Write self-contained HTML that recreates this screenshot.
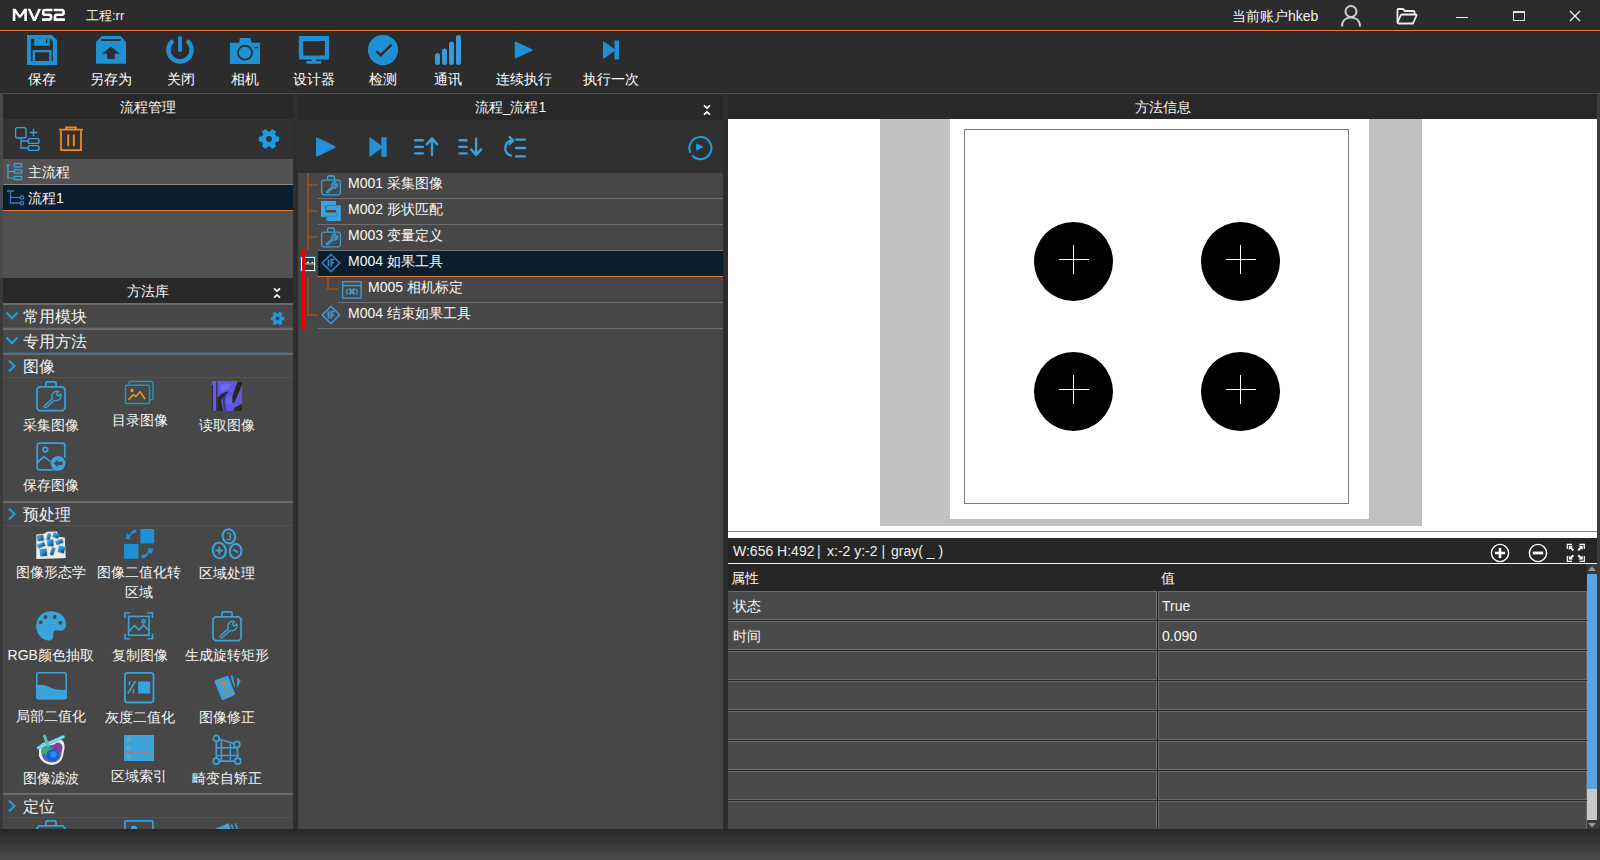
<!DOCTYPE html>
<html><head><meta charset="utf-8">
<style>
*{margin:0;padding:0;box-sizing:border-box}
html,body{width:1600px;height:860px;overflow:hidden;background:#2c2c2c;font-family:"Liberation Sans",sans-serif;color:#f0f0f0}
.a{position:absolute}
.t{position:absolute;white-space:nowrap;line-height:1}
svg{position:absolute;overflow:visible}
</style></head><body>
<div class="a" style="left:0px;top:0px;width:1600px;height:30px;background:#2c2c2c;"></div>
<svg style="left:0px;top:0px" width="80" height="30" viewBox="0 0 80 30"><g fill="#fff">
  <path d="M12.8 20.9V8.75H15.6L19.9 15.2L24.2 8.75H26.9V20.9H24.3V12.9L20.9 17.8H18.9L15.4 12.9V20.9Z"/>
  <path d="M27.6 8.75H30.4L34.4 17.6L38.4 8.75H41.1L35.7 20.9H33.1Z"/>
 </g>
 <g fill="none" stroke="#fff" stroke-width="2.6">
  <path d="M52.4 10.05H45.2Q43.2 10.05 43.2 12.05V12.9Q43.2 14.75 45.2 14.75H49.1Q51.1 14.75 51.1 16.75V17.6Q51.1 19.6 49.1 19.6H41.9"/>
  <path d="M53.7 10.05H61.6Q63.6 10.05 63.6 12.05V12.9Q63.6 14.75 61.6 14.75H57Q55 14.75 55 16.75V19.6H64.9"/>
 </g></svg>
<div class="t" style="left:86px;top:9px;font-size:13px;color:#f2f2f2;">工程:rr</div>
<div class="t" style="left:1232px;top:9px;font-size:14px;color:#f2f2f2;">当前账户hkeb</div>
<svg style="left:1338px;top:3px" width="26" height="26" viewBox="0 0 26 26"><g fill="none" stroke="#cfcfcf" stroke-width="2">
  <circle cx="13" cy="8.5" r="5.5"/>
  <path d="M4 23.5C4 17.5 8 14.5 13 14.5S22 17.5 22 23.5"/>
 </g></svg>
<svg style="left:1395px;top:6px" width="24" height="20" viewBox="0 0 24 20"><g fill="none" stroke="#f0f0f0" stroke-width="1.8" stroke-linejoin="round">
  <path d="M2.5 16.5V4Q2.5 3 3.5 3H8L10 5H18.5Q19.5 5 19.5 6V8.5"/>
  <path d="M2.5 16.5Q3 17.5 4 17.5H18L21.5 9.5Q21.8 8.5 20.8 8.5H7Q6 8.5 5.6 9.5L2.5 16.5Z"/>
 </g></svg>
<div class="a" style="left:1456px;top:17px;width:12px;height:1px;background:#eee;"></div>
<div class="a" style="left:1513px;top:11px;width:12px;height:10px;background:transparent;border:1px solid #ddd;border-top-width:2px"></div>
<svg style="left:1568px;top:9px" width="14" height="14" viewBox="0 0 14 14"><path d="M2 2L12 12M12 2L2 12" stroke="#eee" stroke-width="1.3"/></svg>
<div class="a" style="left:0px;top:30px;width:1600px;height:1px;background:#ec7541;"></div>
<div class="a" style="left:0px;top:31px;width:1600px;height:62px;background:#2c2c2c;"></div>
<svg style="left:27px;top:35px" width="30" height="30" viewBox="0 0 30 30"><path d="M0 0H24.6L30 5.1V30H0Z" fill="#2090d5"/>
 <path d="M3.9 3.7H23.3L25.9 6.5V25.9H3.9Z" fill="#2c2c2c"/>
 <rect x="7.25" y="3.7" width="15.45" height="7.1" fill="#2090d5"/>
 <rect x="19" y="4.5" width="1.4" height="3.6" fill="#2c2c2c"/>
 <rect x="5.6" y="15" width="19" height="10.9" fill="#2090d5"/>
 <rect x="8.1" y="17.3" width="14" height="8.7" fill="#2c2c2c"/></svg>
<svg style="left:96px;top:36px" width="30" height="28" viewBox="0 0 30 28"><path d="M5.9 0H24.6L30 6V27.8H0V6Z" fill="#2090d5"/>
 <path d="M5.6 3.1H24.4Q25.3 3.1 24.6 4.2L24.2 5H5.8L5.3 4.2Q4.7 3.1 5.6 3.1Z" fill="#2c2c2c"/>
 <path d="M15 10.4L23.8 17.8H18.75V23H11.2V17.8H6Z" fill="#2c2c2c"/></svg>
<svg style="left:162px;top:32px" width="36" height="36" viewBox="0 0 36 36"><path d="M18 5.9V18.2" stroke="#2090d5" stroke-width="3.8" stroke-linecap="round" fill="none"/>
 <path d="M9.6 10A11.55 11.55 0 1 0 26.4 10" stroke="#2090d5" stroke-width="4.5" stroke-linecap="round" fill="none"/></svg>
<svg style="left:227px;top:32px" width="36" height="36" viewBox="0 0 36 36"><path d="M12.3 10.7L12.8 5.9H23.5L24.6 10.7H32.3Q33 10.7 33 11.4V31.3Q33 32 32.3 32H3.6Q2.9 32 2.9 31.3V11.4Q2.9 10.7 3.6 10.7Z" fill="#2090d5"/>
 <circle cx="18" cy="20.7" r="7" fill="none" stroke="#2c2c2c" stroke-width="1.7"/>
 <rect x="27.4" y="14.85" width="3.6" height="1.4" rx="0.6" fill="#2c2c2c"/></svg>
<svg style="left:296px;top:32px" width="36" height="36" viewBox="0 0 36 36"><path d="M2.9 4H33.05V27.6H2.9Z M7.1 9V23.6H28.9V9Z" fill="#2090d5" fill-rule="evenodd"/>
 <rect x="15.9" y="27" width="4.2" height="3.5" fill="#2090d5"/>
 <rect x="10.25" y="28.9" width="15.25" height="2.9" rx="1.2" fill="#2090d5"/></svg>
<svg style="left:365px;top:32px" width="36" height="36" viewBox="0 0 36 36"><circle cx="18" cy="18" r="15.05" fill="#2090d5"/>
 <path d="M11.3 19L15.7 23.4L26.6 12.55" stroke="#2c2c2c" stroke-width="2.4" fill="none"/></svg>
<svg style="left:430px;top:32px" width="36" height="36" viewBox="0 0 36 36"><g stroke="#3a9ad6" stroke-width="5" stroke-linecap="round">
  <path d="M7.5 23.6V30.5M14.5 19V30.5M21.5 12.1V30.5M28.5 5.4V30.5"/></g></svg>
<svg style="left:512px;top:38px" width="24" height="24" viewBox="0 0 24 24"><path d="M4.2 3.8Q2.75 2.9 2.75 4.6V19.4Q2.75 21.1 4.2 20.2L20.2 12.8Q21.2 12 20.2 11.2Z" fill="#2090d5"/></svg>
<svg style="left:600px;top:38px" width="24" height="24" viewBox="0 0 24 24"><path d="M4.2 3.8Q3 2.9 3 4.6V19.4Q3 21.1 4.2 20.2L14.5 13V21.4H19V2.6H14.5V11Z" fill="#2090d5"/></svg>
<div class="t" style="left:2.0px;top:72px;width:80px;text-align:center;font-size:14px;color:#ffffff;">保存</div>
<div class="t" style="left:70.6px;top:72px;width:80px;text-align:center;font-size:14px;color:#ffffff;">另存为</div>
<div class="t" style="left:140.6px;top:72px;width:80px;text-align:center;font-size:14px;color:#ffffff;">关闭</div>
<div class="t" style="left:205.0px;top:72px;width:80px;text-align:center;font-size:14px;color:#ffffff;">相机</div>
<div class="t" style="left:274.0px;top:72px;width:80px;text-align:center;font-size:14px;color:#ffffff;">设计器</div>
<div class="t" style="left:343.0px;top:72px;width:80px;text-align:center;font-size:14px;color:#ffffff;">检测</div>
<div class="t" style="left:408.0px;top:72px;width:80px;text-align:center;font-size:14px;color:#ffffff;">通讯</div>
<div class="t" style="left:483.5px;top:72px;width:80px;text-align:center;font-size:14px;color:#ffffff;">连续执行</div>
<div class="t" style="left:570.5px;top:72px;width:80px;text-align:center;font-size:14px;color:#ffffff;">执行一次</div>
<div class="a" style="left:0px;top:93px;width:1600px;height:1px;background:#4d4d4d;"></div>
<div class="a" style="left:0px;top:94px;width:3px;height:184px;background:#4a4a4a;"></div>
<div class="a" style="left:0px;top:278px;width:3px;height:552px;background:#3a3a3a;"></div>
<div class="a" style="left:3px;top:94px;width:290px;height:25px;background:#282828;"></div>
<div class="t" style="left:48.0px;top:100px;width:200px;text-align:center;font-size:14px;color:#f8f8f8;">流程管理</div>
<div class="a" style="left:3px;top:119px;width:290px;height:40px;background:#313131;"></div>
<svg style="left:12px;top:124px" width="30" height="30" viewBox="0 0 30 30"><g fill="none" stroke="#3aa3dc" stroke-width="1.3">
  <rect x="3.6" y="3.6" width="10.4" height="10.4" rx="2"/>
  <path d="M17.8 8.5H25.2M21.5 4.8V12.2"/>
  <rect x="16.2" y="14.6" width="10.8" height="4.8" rx="2"/>
  <rect x="16.2" y="21.6" width="10.8" height="4.8" rx="2"/>
  <path d="M9 14V24H16.2M9 17H16.2"/>
 </g></svg>
<svg style="left:56px;top:124px" width="30" height="30" viewBox="0 0 30 30"><g fill="none" stroke="#f28a18" stroke-width="1.8">
  <path d="M3 5.6H27M10.2 5.6V3.4H19.8V5.6"/>
  <path d="M5 6.5V26.1H25V6.5"/>
  <path d="M12.2 10.5V22.2M17.8 10.5V22.2" stroke-width="1.9"/>
 </g></svg>
<svg style="left:258px;top:128px" width="22" height="22" viewBox="0 0 22 22"><path fill="#1a9be2" fill-rule="evenodd" d="M18.10 8.28 L21.13 8.66 L21.13 13.34 L18.10 13.72 L16.91 15.78 L18.09 18.61 L14.04 20.95 L12.19 18.51 L9.81 18.51 L7.96 20.95 L3.91 18.61 L5.09 15.78 L3.90 13.72 L0.87 13.34 L0.87 8.66 L3.90 8.28 L5.09 6.22 L3.91 3.39 L7.96 1.05 L9.81 3.49 L12.19 3.49 L14.04 1.05 L18.09 3.39 L16.91 6.22Z M13.90 11.00A2.9 2.9 0 1 0 8.10 11.00A2.9 2.9 0 1 0 13.90 11.00Z"/></svg>
<div class="a" style="left:3px;top:159px;width:290px;height:119px;background:#515151;"></div>
<div class="a" style="left:3px;top:184px;width:290px;height:1px;background:#8a8a8a;"></div>
<div class="a" style="left:3px;top:185px;width:290px;height:25px;background:#0b1e2c;"></div>
<div class="a" style="left:3px;top:210px;width:290px;height:1px;background:#ea7440;"></div>
<svg style="left:5px;top:162px" width="20" height="20" viewBox="0 0 20 20"><g fill="none" stroke="#3ea6df" stroke-width="1.2">
  <path d="M1.5 3H5M3 3V16H9M3 9.5H9"/>
  <rect x="9.2" y="1.6" width="7.6" height="3.2" rx="0.5"/>
  <rect x="9.2" y="7.9" width="7.6" height="3.2" rx="0.5"/>
  <rect x="9.2" y="14.4" width="7.6" height="3.2" rx="0.5"/>
 </g></svg>
<svg style="left:5px;top:188px" width="20" height="20" viewBox="0 0 20 20"><g fill="none" stroke="#3a7fc4" stroke-width="1.3">
  <path d="M2 3H9M5.5 3V15H16"/>
  <path d="M5.5 9.5H16"/>
  <circle cx="17" cy="9.5" r="1.7"/>
  <circle cx="17" cy="15" r="1.7"/>
 </g></svg>
<div class="t" style="left:28px;top:165px;font-size:14px;color:#f8f8f8;">主流程</div>
<div class="t" style="left:28px;top:191px;font-size:14px;color:#f8f8f8;">流程1</div>
<div class="a" style="left:3px;top:278px;width:290px;height:25px;background:#282828;"></div>
<div class="t" style="left:48.0px;top:284px;width:200px;text-align:center;font-size:14px;color:#f8f8f8;">方法库</div>
<svg style="left:272px;top:286px" width="10" height="14" viewBox="0 0 10 14"><path d="M2 2.4L5 5.2L8 2.4M2 11.6L5 8.8L8 11.6" stroke="#fff" stroke-width="1.7" fill="none"/></svg>
<div class="a" style="left:3px;top:303px;width:290px;height:527px;background:#474747;"></div>
<div class="a" style="left:3px;top:303px;width:290px;height:2px;background:#6a6a6a;"></div>
<div class="a" style="left:3px;top:327px;width:290px;height:1px;background:#3b5870;"></div>
<svg style="left:5px;top:311px" width="14" height="10" viewBox="0 0 14 10"><path d="M1.5 1.5L7 7.2L12.5 1.5" stroke="#1aa0e2" stroke-width="2" fill="none"/></svg>
<div class="t" style="left:23px;top:309px;font-size:16px;color:#f2f2f2;">常用模块</div>
<svg style="left:270px;top:311px" width="15" height="15" viewBox="0 0 22 22"><path fill="#1a9be2" fill-rule="evenodd" d="M18.10 8.28 L21.13 8.66 L21.13 13.34 L18.10 13.72 L16.91 15.78 L18.09 18.61 L14.04 20.95 L12.19 18.51 L9.81 18.51 L7.96 20.95 L3.91 18.61 L5.09 15.78 L3.90 13.72 L0.87 13.34 L0.87 8.66 L3.90 8.28 L5.09 6.22 L3.91 3.39 L7.96 1.05 L9.81 3.49 L12.19 3.49 L14.04 1.05 L18.09 3.39 L16.91 6.22Z M13.90 11.00A2.9 2.9 0 1 0 8.10 11.00A2.9 2.9 0 1 0 13.90 11.00Z"/></svg>
<div class="a" style="left:3px;top:328px;width:290px;height:2px;background:#6a6a6a;"></div>
<div class="a" style="left:3px;top:352px;width:290px;height:1px;background:#3b5870;"></div>
<svg style="left:5px;top:336px" width="14" height="10" viewBox="0 0 14 10"><path d="M1.5 1.5L7 7.2L12.5 1.5" stroke="#1aa0e2" stroke-width="2" fill="none"/></svg>
<div class="t" style="left:23px;top:334px;font-size:16px;color:#f2f2f2;">专用方法</div>
<div class="a" style="left:3px;top:353px;width:290px;height:2px;background:#6a6a6a;"></div>
<div class="a" style="left:3px;top:377px;width:290px;height:1px;background:#3b5870;"></div>
<svg style="left:6px;top:359px" width="12" height="14" viewBox="0 0 12 14"><path d="M2.8 1.5L8.6 7L2.8 12.5" stroke="#1aa0e2" stroke-width="2" fill="none"/></svg>
<div class="t" style="left:23px;top:359px;font-size:16px;color:#f2f2f2;">图像</div>
<div class="a" style="left:3px;top:501px;width:290px;height:2px;background:#6a6a6a;"></div>
<div class="a" style="left:3px;top:525px;width:290px;height:1px;background:#3b5870;"></div>
<svg style="left:6px;top:507px" width="12" height="14" viewBox="0 0 12 14"><path d="M2.8 1.5L8.6 7L2.8 12.5" stroke="#1aa0e2" stroke-width="2" fill="none"/></svg>
<div class="t" style="left:23px;top:507px;font-size:16px;color:#f2f2f2;">预处理</div>
<div class="a" style="left:3px;top:793px;width:290px;height:2px;background:#6a6a6a;"></div>
<div class="a" style="left:3px;top:817px;width:290px;height:1px;background:#3b5870;"></div>
<svg style="left:6px;top:799px" width="12" height="14" viewBox="0 0 12 14"><path d="M2.8 1.5L8.6 7L2.8 12.5" stroke="#1aa0e2" stroke-width="2" fill="none"/></svg>
<div class="t" style="left:23px;top:799px;font-size:16px;color:#f2f2f2;">定位</div>
<svg style="left:36px;top:381px" width="30" height="30" viewBox="0 0 30 30"><g transform="scale(1.0)"><g fill="none" stroke="#3aa3dc" stroke-width="1.7">
  <path d="M3.2 5.9H26.8L29 8.1V27.5L26.8 29.7H3.2L1 27.5V8.1Z"/>
  <path d="M9.9 5.9V2.4Q9.9 0.9 11.4 0.9H18.6Q20.1 0.9 20.1 2.4V5.9"/>
 </g>
 <path d="M8.6 24.4L16.5 17.6A5 5 0 0 1 22.5 10.5L20.4 13.2L22.2 15.1L24.6 13A5 5 0 0 1 18.3 19.5L10.4 26.4Q9 27.2 8.2 26.2Q7.6 25.2 8.6 24.4Z" fill="none" stroke="#3aa3dc" stroke-width="1.3"/>
 <path d="M10 25L16.5 19.2" stroke="#3aa3dc" stroke-width="0.7" stroke-dasharray="1.2 1"/></g></svg>
<svg style="left:124px;top:380px" width="32" height="26" viewBox="0 0 32 26"><g fill="none" stroke="#1e9ab4" stroke-width="1.5">
  <path d="M5.2 4.6V2.6Q5.2 1.5 6.3 1.5H27.9Q29 1.5 29 2.6V18.4Q29 19.5 27.9 19.5H25.5"/>
  <rect x="1.5" y="5.2" width="24" height="18.2" rx="1.2"/>
 </g>
 <circle cx="8" cy="10.4" r="1.7" fill="#f09a1a"/>
 <path d="M4.5 19.6L9.6 14.6L12 16.6L16 11.7L21 19" stroke="#f09a1a" stroke-width="1.5" fill="none" stroke-linejoin="round"/></svg>
<svg style="left:212px;top:381px" width="30" height="30" viewBox="0 0 30 30"><rect width="30" height="30" fill="#5b57de"/>
 <rect x="0" y="4" width="1" height="26" fill="#2c2c3a"/>
 <rect x="1" y="0" width="3" height="30" fill="#615df0"/>
 <rect x="4" y="0" width="1.4" height="30" fill="#34344a"/>
 <path d="M5.4 30V17Q9 12 16.7 10.3L13.6 14.2Q9.5 17 9.2 21L11.5 30Z" fill="#2a2a22"/><path d="M11 16L14.5 14Q12 19 13.5 24L15 30H12.5L10.8 22Z" fill="#3e3a8a"/>
 <path d="M25.7 0.4H30V4L22.3 21.5L18.8 22Q21 12 25.7 0.4Z" fill="#26261c"/>
 <path d="M22.3 26.7L30 22.8V30H21.5Z" fill="#2a2a20"/>
 <path d="M8 4Q13 1 19 3.5L16 8Q12 9 8.5 12Z" fill="#6d69f2"/>
 <ellipse cx="17.5" cy="19" rx="3" ry="4.5" fill="#6763ea"/></svg>
<svg style="left:36px;top:442px" width="32" height="32" viewBox="0 0 32 32"><g fill="none" stroke="#3aa3dc" stroke-width="1.7">
  <path d="M21 27.8H3.6Q1.2 27.8 1.2 25.4V3.6Q1.2 1.2 3.6 1.2H26.4Q28.8 1.2 28.8 3.6V16"/>
  <circle cx="9.3" cy="7.6" r="2.3"/>
  <path d="M1.2 20.5L8 14.6L14.6 19.6"/>
 </g>
 <circle cx="22.1" cy="21.4" r="7.9" fill="#474747"/>
 <circle cx="22.1" cy="21.4" r="7.4" fill="#3aa3dc"/>
 <path d="M17.6 21.4L21.6 17.6V19.7H26.6V23.1H21.6V25.2Z" fill="#474747"/></svg>
<svg style="left:36px;top:531px" width="30" height="28" viewBox="0 0 30 28"><defs><linearGradient id="mg" x1="0" y1="0" x2="1" y2="1"><stop offset="0" stop-color="#46aef0"/><stop offset="0.55" stop-color="#2585c4"/><stop offset="1" stop-color="#0b3550"/></linearGradient></defs>
 <path d="M0.3 3.5L8 2.7L11 0.8L21 0.4L23 6L28.8 6.5L29.8 27L18.5 27.5L0.3 28Z" fill="#ececec"/>
 <g transform="translate(4.2 6.9) rotate(-10)"><rect x="-2.6999999999999997" y="-1.9" width="6.6" height="5.6" fill="#9a9a9a" opacity="0.6"/><path d="M-3.3 -2.8H3.3L2.9699999999999998 2.8H-2.9699999999999998Z" fill="url(#mg)"/></g>
 <g transform="translate(12.6 5.6) rotate(15)"><rect x="-1.2000000000000002" y="-2.5" width="3.6" height="6.8" fill="#9a9a9a" opacity="0.6"/><path d="M-1.8 -3.4H1.8L1.62 3.4H-1.62Z" fill="url(#mg)"/></g>
 <g transform="translate(20 4.3) rotate(20)"><rect x="-2.6" y="-1.5" width="6.4" height="4.8" fill="#9a9a9a" opacity="0.6"/><path d="M-3.2 -2.4H3.2L2.8800000000000003 2.4H-2.8800000000000003Z" fill="url(#mg)"/></g>
 <g transform="translate(5 14.2) rotate(-25)"><rect x="-3.4" y="-1.1" width="8" height="4" fill="#9a9a9a" opacity="0.6"/><path d="M-4 -2H4L3.6 2H-3.6Z" fill="url(#mg)"/></g>
 <g transform="translate(14.3 11.8) rotate(0)"><rect x="-2.6" y="-2.3000000000000003" width="6.4" height="6.4" fill="#9a9a9a" opacity="0.6"/><path d="M-3.2 -3.2H3.2L2.8800000000000003 3.2H-2.8800000000000003Z" fill="url(#mg)"/></g>
 <g transform="translate(23.2 10.9) rotate(-20)"><rect x="-3.1999999999999997" y="-1.1" width="7.6" height="4" fill="#9a9a9a" opacity="0.6"/><path d="M-3.8 -2H3.8L3.42 2H-3.42Z" fill="url(#mg)"/></g>
 <g transform="translate(7.3 21.5) rotate(-5)"><rect x="-3.0" y="-2.7" width="7.2" height="7.2" fill="#9a9a9a" opacity="0.6"/><path d="M-3.6 -3.6H3.6L3.24 3.6H-3.24Z" fill="url(#mg)"/></g>
 <g transform="translate(16.5 20.2) rotate(20)"><rect x="-1.2999999999999998" y="-2.9" width="3.8" height="7.6" fill="#9a9a9a" opacity="0.6"/><path d="M-1.9 -3.8H1.9L1.71 3.8H-1.71Z" fill="url(#mg)"/></g>
 <g transform="translate(25.4 18.3) rotate(15)"><rect x="-2.8" y="-2.3000000000000003" width="6.8" height="6.4" fill="#9a9a9a" opacity="0.6"/><path d="M-3.4 -3.2H3.4L3.06 3.2H-3.06Z" fill="url(#mg)"/></g></svg>
<svg style="left:123px;top:528px" width="32" height="32" viewBox="0 0 32 32"><g fill="#2090d5">
  <rect x="17.3" y="1" width="13.9" height="14.5"/>
  <rect x="1" y="16" width="14.5" height="14.7"/>
  <path d="M13.3 1.2Q7.8 1.8 6.8 7.3L4.2 5.6L2.5 10.7L7.9 11.5L6.8 9.7Q8.3 4.9 13.3 4.8Z"/>
  <path d="M18.7 30.6Q24.8 30 25.6 24.4L28.2 26.2L30.3 20.8L24.5 20.1L25.6 21.8Q24.4 26.6 18.7 27.1Z"/>
 </g></svg>
<svg style="left:207px;top:524px" width="40" height="40" viewBox="0 0 40 40"><g fill="none" stroke="#3aa3dc" stroke-width="2.1">
  <ellipse cx="21.9" cy="12.3" rx="6.2" ry="7.1" transform="rotate(-15 21.9 12.3)"/>
  <ellipse cx="12.3" cy="26.5" rx="6.6" ry="7.8" transform="rotate(-10 12.3 26.5)"/>
  <ellipse cx="28.6" cy="27" rx="5.8" ry="7" transform="rotate(8 28.6 27)"/>
  <path d="M19.8 9.8Q22.5 8.2 23.6 10.4Q24 12 22 12.4Q24.4 13 23.4 15Q22 16.5 19.8 15" stroke-width="1.2"/>
  <path d="M12.3 22.8V30.2M8.6 26.5H16" stroke-width="1.9"/>
  <path d="M26 25.5L31 28.3" stroke-width="1.9"/>
 </g></svg>
<svg style="left:35px;top:610px" width="32" height="32" viewBox="0 0 32 32"><path d="M16 1.2C24.5 1.2 31 6.6 31 14.2C31 19.8 27 21.4 23 20.4C19.6 19.6 17.5 21.5 18.2 25.2C18.9 28.8 16.5 30.8 13.3 30.5C6.2 29.8 1.2 23.7 1.2 16C1.2 7.4 7.5 1.2 16 1.2Z" fill="#3aa3dc"/>
 <g fill="#474747"><circle cx="10.5" cy="7" r="1.9"/><circle cx="19.8" cy="7" r="1.9"/><circle cx="5.8" cy="12.3" r="1.9"/><circle cx="25.3" cy="12.8" r="1.9"/></g></svg>
<svg style="left:124px;top:612px" width="30" height="28" viewBox="0 0 30 28"><g fill="none" stroke="#3aa3dc" stroke-width="1.6">
  <path d="M1 6V1H6M23.5 1H28.5V6M28.5 21.5V26.8H23.5M6 26.8H1V21.5"/>
  <rect x="4.6" y="4.4" width="20.5" height="18.8"/>
  <path d="M4.6 19.5L10.5 13.5L15 17.8L19.5 13.2L25 18.8"/>
  <circle cx="19.6" cy="9.3" r="1.6"/>
 </g></svg>
<svg style="left:212px;top:611px" width="30" height="30" viewBox="0 0 30 30"><g transform="scale(1.0)"><g fill="none" stroke="#3aa3dc" stroke-width="1.7">
  <path d="M3.2 5.9H26.8L29 8.1V27.5L26.8 29.7H3.2L1 27.5V8.1Z"/>
  <path d="M9.9 5.9V2.4Q9.9 0.9 11.4 0.9H18.6Q20.1 0.9 20.1 2.4V5.9"/>
 </g>
 <path d="M8.6 24.4L16.5 17.6A5 5 0 0 1 22.5 10.5L20.4 13.2L22.2 15.1L24.6 13A5 5 0 0 1 18.3 19.5L10.4 26.4Q9 27.2 8.2 26.2Q7.6 25.2 8.6 24.4Z" fill="none" stroke="#3aa3dc" stroke-width="1.3"/>
 <path d="M10 25L16.5 19.2" stroke="#3aa3dc" stroke-width="0.7" stroke-dasharray="1.2 1"/></g></svg>
<svg style="left:36px;top:672px" width="31" height="28" viewBox="0 0 31 28"><rect x="0.8" y="0.8" width="29.4" height="26.2" rx="2" fill="none" stroke="#3aa3dc" stroke-width="1.6"/>
 <path d="M0.8 13.5Q6 11.5 12 14.5Q19 18.5 30.2 18V25Q30.2 27 28.2 27H2.8Q0.8 27 0.8 25Z" fill="#3aa3dc"/></svg>
<svg style="left:124px;top:672px" width="31" height="32" viewBox="0 0 31 32"><rect x="0.9" y="0.9" width="28.6" height="29.6" rx="2.5" fill="none" stroke="#3aa3dc" stroke-width="1.8"/>
 <rect x="14.2" y="9.5" width="12" height="12" fill="#3aa3dc"/>
 <g stroke="#3aa3dc" stroke-width="1.6" fill="none"><path d="M5.5 13V9M3.8 21.5L11.5 9M9.5 17V21.5"/></g></svg>
<svg style="left:208px;top:668px" width="40" height="38" viewBox="0 0 40 38"><path d="M7.2 12.3Q6 12.8 6.5 14L13.7 31.2Q14.2 32.4 15.4 31.9L26.2 27.3Q27.4 26.8 26.9 25.6L20.4 8.6Q19.9 7.4 18.7 7.9Z" fill="#3aa3dc"/>
 <path d="M9.2 14.4H17.5L14.6 19.5L22.5 22L16.5 28.5" stroke="#e07a28" stroke-width="1" fill="none"/>
 <circle cx="19.3" cy="16.5" r="0.9" fill="#e07a28"/>
 <path d="M22.2 7.5L24.7 7.8L27.2 18.5L26.3 19.2Z" fill="#3aa3dc"/>
 <path d="M29 9.3L32.6 12.5L29.4 20.8Z" fill="#3aa3dc"/></svg>
<svg style="left:36px;top:734px" width="30" height="32" viewBox="0 0 30 32"><path d="M3 16Q3 9 10 8L24 5Q29 7 28.5 14L27 22Q25 30 16 31Q6 30 3 22Z" fill="#f0f0f0"/>
 <path d="M5 17Q6 12 11 12L20 10Q26 11 26 16L25 22Q23 28 16 28.5Q8 28 6 22Z" fill="#6a5ab8"/>
 <ellipse cx="11" cy="17" rx="6" ry="4" fill="#34b07a"/>
 <ellipse cx="22" cy="13.5" rx="4.5" ry="5" fill="#7c3f9c"/>
 <circle cx="16.5" cy="21.5" r="6.2" fill="#1760d0"/>
 <circle cx="17.5" cy="20.5" r="3.2" fill="#2f8af2"/>
 <path d="M2.2 13.8L27.3 2.8" stroke="#3ab4d8" stroke-width="3.4" stroke-linecap="round"/>
 <path d="M2.2 13.8L27.3 2.8" stroke="#8ae8f6" stroke-width="1.6" stroke-linecap="round"/>
 <path d="M8.5 2L12 11.5" stroke="#5cc0a8" stroke-width="3" stroke-linecap="round"/></svg>
<svg style="left:124px;top:735px" width="31" height="27" viewBox="0 0 31 27"><rect x="0" y="0" width="30" height="26" fill="#8a8a8a"/>
 <g fill="#3aa3dc"><rect x="0" y="0" width="30" height="7.8"/><rect x="0" y="9" width="30" height="7.7"/><rect x="0" y="18" width="30" height="8"/></g>
 <g fill="#2a2a2a" stroke="#d8ecf8" stroke-width="0.6"><circle cx="4.8" cy="4" r="1.1"/><circle cx="4.8" cy="13" r="1.1"/><circle cx="4.8" cy="22" r="1.1"/></g></svg>
<svg style="left:212px;top:735px" width="31" height="31" viewBox="0 0 31 31"><g fill="none" stroke="#3aa3dc" stroke-width="1.7">
  <circle cx="4.3" cy="3.4" r="3"/><circle cx="24.8" cy="9.4" r="3"/><circle cx="4.3" cy="26.2" r="3"/><circle cx="25.7" cy="26.2" r="3"/>
  <path d="M7.2 4.3L21.9 8.5M4.3 6.4V23.2M7.3 26.2H22.7M25.4 12.4L25.7 23.2"/>
  <path d="M9.4 5.2V26.2M18.3 7.8V26.2M4.3 12.7H25.2M4.3 20.6H25.5" stroke-width="1.5"/>
 </g></svg>
<div class="a" style="left:0;top:819px;width:293px;height:11px;overflow:hidden"><svg style="left:36px;top:1px" width="30" height="30" viewBox="0 0 30 30"><g transform="scale(1.0)"><g fill="none" stroke="#3aa3dc" stroke-width="1.7">
  <path d="M3.2 5.9H26.8L29 8.1V27.5L26.8 29.7H3.2L1 27.5V8.1Z"/>
  <path d="M9.9 5.9V2.4Q9.9 0.9 11.4 0.9H18.6Q20.1 0.9 20.1 2.4V5.9"/>
 </g>
 <path d="M8.6 24.4L16.5 17.6A5 5 0 0 1 22.5 10.5L20.4 13.2L22.2 15.1L24.6 13A5 5 0 0 1 18.3 19.5L10.4 26.4Q9 27.2 8.2 26.2Q7.6 25.2 8.6 24.4Z" fill="none" stroke="#3aa3dc" stroke-width="1.3"/>
 <path d="M10 25L16.5 19.2" stroke="#3aa3dc" stroke-width="0.7" stroke-dasharray="1.2 1"/></g></svg>
<svg style="left:124px;top:1px" width="30" height="28" viewBox="0 0 30 28"><rect x="0.9" y="0.9" width="28" height="26" rx="1.5" fill="none" stroke="#3aa3dc" stroke-width="1.7"/><circle cx="10" cy="9" r="3.2" fill="#3aa3dc"/></svg>
<svg style="left:213px;top:2px" width="30" height="28" viewBox="0 0 30 28"><path d="M2.2 7.8L15.6 2.2L22 21.2L8.8 26.8Z" fill="#3aa3dc"/><path d="M18.3 3.5L23.8 17.6M22.3 2.5L26.6 14" stroke="#3aa3dc" stroke-width="1.6"/></svg>
</div>
<div class="t" style="left:1.0px;top:418px;width:100px;text-align:center;font-size:14px;color:#f6f6f6;">采集图像</div>
<div class="t" style="left:89.5px;top:413px;width:100px;text-align:center;font-size:14px;color:#f6f6f6;">目录图像</div>
<div class="t" style="left:177.0px;top:418px;width:100px;text-align:center;font-size:14px;color:#f6f6f6;">读取图像</div>
<div class="t" style="left:1.0px;top:478px;width:100px;text-align:center;font-size:14px;color:#f6f6f6;">保存图像</div>
<div class="t" style="left:1.0px;top:565px;width:100px;text-align:center;font-size:14px;color:#f6f6f6;">图像形态学</div>
<div class="t" style="left:89.19999999999999px;top:565px;width:100px;text-align:center;font-size:14px;color:#f6f6f6;">图像二值化转</div>
<div class="t" style="left:89.19999999999999px;top:585px;width:100px;text-align:center;font-size:14px;color:#f6f6f6;">区域</div>
<div class="t" style="left:177.0px;top:566px;width:100px;text-align:center;font-size:14px;color:#f6f6f6;">区域处理</div>
<div class="t" style="left:0.7000000000000028px;top:648px;width:100px;text-align:center;font-size:14px;color:#f6f6f6;">RGB颜色抽取</div>
<div class="t" style="left:90.0px;top:648px;width:100px;text-align:center;font-size:14px;color:#f6f6f6;">复制图像</div>
<div class="t" style="left:177.0px;top:648px;width:100px;text-align:center;font-size:14px;color:#f6f6f6;">生成旋转矩形</div>
<div class="t" style="left:0.75px;top:709px;width:100px;text-align:center;font-size:14px;color:#f6f6f6;">局部二值化</div>
<div class="t" style="left:89.5px;top:709.5px;width:100px;text-align:center;font-size:14px;color:#f6f6f6;">灰度二值化</div>
<div class="t" style="left:177.0px;top:709.5px;width:100px;text-align:center;font-size:14px;color:#f6f6f6;">图像修正</div>
<div class="t" style="left:1.2000000000000028px;top:771px;width:100px;text-align:center;font-size:14px;color:#f6f6f6;">图像滤波</div>
<div class="t" style="left:88.69999999999999px;top:769px;width:100px;text-align:center;font-size:14px;color:#f6f6f6;">区域索引</div>
<div class="t" style="left:177.0px;top:771px;width:100px;text-align:center;font-size:14px;color:#f6f6f6;">畸变自矫正</div>
<div class="a" style="left:293px;top:94px;width:5px;height:736px;background:#2e2e2e;"></div>
<div class="a" style="left:298px;top:94px;width:425px;height:26px;background:#282828;"></div>
<div class="t" style="left:410.5px;top:100px;width:200px;text-align:center;font-size:14px;color:#f8f8f8;">流程_流程1</div>
<svg style="left:702px;top:103px" width="10" height="14" viewBox="0 0 10 14"><path d="M2 2.4L5 5.2L8 2.4M2 11.6L5 8.8L8 11.6" stroke="#fff" stroke-width="1.7" fill="none"/></svg>
<div class="a" style="left:298px;top:120px;width:425px;height:53px;background:#303030;"></div>
<div class="a" style="left:298px;top:173px;width:425px;height:657px;background:#474747;"></div>
<svg style="left:313px;top:134px" width="26" height="26" viewBox="0 0 26 26"><path d="M4.7 3.8Q3 2.9 3 4.8V21.2Q3 23.1 4.7 22.2L22 14Q23 13 22 12Z" fill="#2490d6"/></svg>
<svg style="left:366px;top:134px" width="26" height="26" viewBox="0 0 26 26"><path d="M4.8 3.8Q3.4 2.9 3.4 4.8V21.2Q3.4 23.1 4.8 22.2L15.3 14.6V22.7H20.6V3.2H15.3V11.4Z" fill="#2490d6"/></svg>
<svg style="left:412px;top:134px" width="28" height="26" viewBox="0 0 28 26"><g stroke="#3aa0dc" stroke-width="2.4" stroke-linecap="round" fill="none"><path d="M3.2 6.3H10.8M3.2 12.9H10.8M3.2 19.4H10.8"/><path d="M20 4.6V21M14.9 10.4L20 4.6L25.1 10.4"/></g></svg>
<svg style="left:456px;top:134px" width="28" height="26" viewBox="0 0 28 26"><g stroke="#3aa0dc" stroke-width="2.4" stroke-linecap="round" fill="none"><path d="M3.4 6.3H10.6M3.4 12.9H10.6M3.4 19.4H10.6"/><path d="M20.1 4.6V21M15 15.4L20.1 21L25.2 15.4"/></g></svg>
<svg style="left:500px;top:134px" width="28" height="26" viewBox="0 0 28 26"><g stroke="#3aa0dc" stroke-width="2.4" stroke-linecap="round" fill="none"><path d="M16.2 5.6H25M16.2 14H25M16.2 22.4H25"/><path d="M10.7 21.5A7.8 7.8 0 0 1 11 6.6H12.5"/><path d="M9.6 3L13 6.6L9.6 10.2"/></g></svg>
<svg style="left:685px;top:133px" width="28" height="28" viewBox="0 0 28 28"><path d="M5.5 19.8A11 11 0 1 1 7.3 22.5" stroke="#1d9ee0" stroke-width="2" fill="none"/><path d="M11.2 10.3V17.7L18.7 14Z" fill="#1d9ee0"/></svg>
<div class="a" style="left:318px;top:198px;width:405px;height:1px;background:#6f6f6f;"></div>
<svg style="left:321px;top:175px" width="20" height="20" viewBox="0 0 20 20"><g transform="scale(0.6667)"><g fill="none" stroke="#3aa3dc" stroke-width="1.9">
  <path d="M3.2 7.6H26.8L29 9.8V27.5L26.8 29.7H3.2L1 27.5V9.8Z"/>
  <path d="M9.9 7.6V3Q9.9 1.5 11.4 1.5H18.6Q20.1 1.5 20.1 3V7.6"/>
 </g>
 <path d="M8.6 24.4L16.5 17.6A5 5 0 0 1 22.5 10.5L20.4 13.2L22.2 15.1L24.6 13A5 5 0 0 1 18.3 19.5L10.4 26.4Q9 27.2 8.2 26.2Q7.6 25.2 8.6 24.4Z" fill="#3aa3dc" fill-opacity="0.55" stroke="#3aa3dc" stroke-width="1.5"/></g></svg>
<div class="t" style="left:348px;top:176px;font-size:14px;color:#f8f8f8;">M001 采集图像</div>
<div class="a" style="left:318px;top:224px;width:405px;height:1px;background:#6f6f6f;"></div>
<svg style="left:321px;top:201px" width="20" height="20" viewBox="0 0 20 20"><path d="M0 0H15V4.5H4.5V11.5H15V16H0Z" fill="#3aa3dc"/>
 <path d="M5.4 4.2H19.8V20H5.4V15.6H15.3V9H5.4Z" fill="#3aa3dc"/>
 <path d="M4.9 4.5H15.2M4.9 15.9H15.2" stroke="#2a6d98" stroke-width="0.6"/></svg>
<div class="t" style="left:348px;top:202px;font-size:14px;color:#f8f8f8;">M002 形状匹配</div>
<div class="a" style="left:318px;top:250px;width:405px;height:1px;background:#6f6f6f;"></div>
<svg style="left:321px;top:227px" width="20" height="20" viewBox="0 0 20 20"><g transform="scale(0.6667)"><g fill="none" stroke="#3aa3dc" stroke-width="1.9">
  <path d="M3.2 7.6H26.8L29 9.8V27.5L26.8 29.7H3.2L1 27.5V9.8Z"/>
  <path d="M9.9 7.6V3Q9.9 1.5 11.4 1.5H18.6Q20.1 1.5 20.1 3V7.6"/>
 </g>
 <path d="M8.6 24.4L16.5 17.6A5 5 0 0 1 22.5 10.5L20.4 13.2L22.2 15.1L24.6 13A5 5 0 0 1 18.3 19.5L10.4 26.4Q9 27.2 8.2 26.2Q7.6 25.2 8.6 24.4Z" fill="#3aa3dc" fill-opacity="0.55" stroke="#3aa3dc" stroke-width="1.5"/></g></svg>
<div class="t" style="left:348px;top:228px;font-size:14px;color:#f8f8f8;">M003 变量定义</div>
<div class="a" style="left:318px;top:251px;width:405px;height:25px;background:#0b1e2c;"></div>
<div class="a" style="left:318px;top:276px;width:405px;height:1px;background:#ea7440;"></div>
<svg style="left:321px;top:253px" width="20" height="20" viewBox="0 0 20 20"><path d="M10 1.3L18.7 10L10 18.7L1.3 10Z" fill="none" stroke="#3b7fc2" stroke-width="1.6"/>
 <path d="M7.5 6.4V13.6M10.3 13.6V6.6H13.4M10.3 9.9H13" stroke="#3b7fc2" stroke-width="1.9" fill="none"/></svg>
<div class="t" style="left:348px;top:254px;font-size:14px;color:#f8f8f8;">M004 如果工具</div>
<div class="a" style="left:338px;top:302px;width:385px;height:1px;background:#6f6f6f;"></div>
<svg style="left:342px;top:281px" width="20" height="18" viewBox="0 0 20 18"><g fill="none" stroke="#3aa3dc" stroke-width="1.3">
  <rect x="0.7" y="0.7" width="18.4" height="16.4"/>
  <path d="M0.7 4.6H19.1"/>
  <path d="M5.5 8Q3.8 10.6 5.5 13.5M14.3 8Q16 10.6 14.3 13.5"/>
 </g>
 <path d="M7.3 7.7L12.5 13.4M12.5 7.7L7.3 13.4" stroke="#3aa3dc" stroke-width="2"/></svg>
<div class="t" style="left:368px;top:280px;font-size:14px;color:#f8f8f8;">M005 相机标定</div>
<div class="a" style="left:318px;top:328px;width:405px;height:1px;background:#6f6f6f;"></div>
<svg style="left:321px;top:305px" width="20" height="20" viewBox="0 0 20 20"><path d="M10 1.3L18.7 10L10 18.7L1.3 10Z" fill="none" stroke="#3b9ad6" stroke-width="1.6"/>
 <path d="M7.5 6.4V13.6M10.3 13.6V6.6H13.4M10.3 9.9H13" stroke="#3b9ad6" stroke-width="1.9" fill="none"/></svg>
<div class="t" style="left:348px;top:306px;font-size:14px;color:#f8f8f8;">M004 结束如果工具</div>
<div class="a" style="left:307px;top:173px;width:2px;height:77px;background:#8a4f24;"></div>
<div class="a" style="left:309px;top:184px;width:9px;height:2px;background:#8a4f24;"></div>
<div class="a" style="left:309px;top:210px;width:9px;height:2px;background:#8a4f24;"></div>
<div class="a" style="left:309px;top:236px;width:9px;height:2px;background:#8a4f24;"></div>
<div class="a" style="left:307px;top:277px;width:2px;height:39px;background:#8a4f24;"></div>
<div class="a" style="left:309px;top:314px;width:9px;height:2px;background:#8a4f24;"></div>
<div class="a" style="left:327px;top:277px;width:2px;height:13px;background:#8a4f24;"></div>
<div class="a" style="left:329px;top:288px;width:9px;height:2px;background:#8a4f24;"></div>
<svg style="left:300px;top:256px" width="16" height="16" viewBox="0 0 16 16"><rect x="0.5" y="0.5" width="15" height="15" fill="#3c3c3c" stroke="#1c6a94" stroke-width="1"/>
 <rect x="1.5" y="1.5" width="13" height="13" fill="none" stroke="#eef6ff" stroke-width="1"/>
 <path d="M2 8H14" stroke="#eef6ff" stroke-width="1"/>
 <path d="M2.2 8.6H14" stroke="#1c6a94" stroke-width="0.6"/>
 <rect x="6.8" y="5.8" width="2.2" height="1.3" fill="#fff"/>
 <rect x="11.6" y="5.8" width="1.3" height="1.3" fill="#fff"/></svg>
<div class="a" style="left:302px;top:250px;width:3px;height:80px;background:#f20000;"></div>
<div class="a" style="left:723px;top:94px;width:5px;height:736px;background:#2d2d2d;"></div>
<div class="a" style="left:728px;top:94px;width:869px;height:25px;background:#282828;"></div>
<div class="t" style="left:1062.5px;top:100px;width:200px;text-align:center;font-size:14px;color:#f8f8f8;">方法信息</div>
<div class="a" style="left:1597px;top:94px;width:3px;height:736px;background:#3c3c3c;"></div>
<div class="a" style="left:728px;top:119px;width:869px;height:419px;background:#ffffff;"></div>
<div class="a" style="left:880px;top:119px;width:542px;height:407px;background:#c2c2c2;"></div>
<div class="a" style="left:1369px;top:119px;width:53px;height:407px;background:#c0c0c0;"></div>
<div class="a" style="left:950px;top:519px;width:419px;height:7px;background:#c0c0c0;"></div>
<div class="a" style="left:950px;top:119px;width:419px;height:400px;background:#ffffff;"></div>
<div class="a" style="left:964px;top:128.5px;width:385px;height:375px;background:transparent;border:1.7px solid #7c7c7c"></div>
<div class="a" style="left:1034.0px;top:221.7px;width:79px;height:79px;border-radius:50%;background:#000"></div>
<div class="a" style="left:1058.5px;top:259.0px;width:30px;height:1px;background:#fff;"></div>
<div class="a" style="left:1073.0px;top:244.7px;width:1px;height:29px;background:#fff;"></div>
<div class="a" style="left:1201.0px;top:221.7px;width:79px;height:79px;border-radius:50%;background:#000"></div>
<div class="a" style="left:1225.5px;top:259.0px;width:30px;height:1px;background:#fff;"></div>
<div class="a" style="left:1240.0px;top:244.7px;width:1px;height:29px;background:#fff;"></div>
<div class="a" style="left:1034.0px;top:351.7px;width:79px;height:79px;border-radius:50%;background:#000"></div>
<div class="a" style="left:1058.5px;top:389.0px;width:30px;height:1px;background:#fff;"></div>
<div class="a" style="left:1073.0px;top:374.7px;width:1px;height:29px;background:#fff;"></div>
<div class="a" style="left:1201.0px;top:351.7px;width:79px;height:79px;border-radius:50%;background:#000"></div>
<div class="a" style="left:1225.5px;top:389.0px;width:30px;height:1px;background:#fff;"></div>
<div class="a" style="left:1240.0px;top:374.7px;width:1px;height:29px;background:#fff;"></div>
<div class="a" style="left:728px;top:531px;width:869px;height:1px;background:#7d8090;"></div>
<div class="a" style="left:728px;top:538px;width:869px;height:25px;background:#262626;"></div>
<div class="t" style="left:733px;top:544px;font-size:14px;color:#f0f0f0;">W:656 H:492</div>
<div class="t" style="left:817px;top:544px;font-size:14px;color:#e8e8e8;">|</div>
<div class="t" style="left:827px;top:544px;font-size:14px;color:#f0f0f0;">x:-2 y:-2</div>
<div class="t" style="left:881.5px;top:544px;font-size:14px;color:#e8e8e8;">|</div>
<div class="t" style="left:891px;top:544px;font-size:14px;color:#f0f0f0;">gray( _ )</div>
<svg style="left:1490px;top:543px" width="20" height="20" viewBox="0 0 20 20"><circle cx="10" cy="10" r="8.6" fill="none" stroke="#fff" stroke-width="1.4"/><path d="M10 5V15M5 10H15" stroke="#fff" stroke-width="2.6"/></svg>
<svg style="left:1528px;top:543px" width="20" height="20" viewBox="0 0 20 20"><circle cx="10" cy="10" r="8.6" fill="none" stroke="#fff" stroke-width="1.4"/><path d="M4.8 10H15.2" stroke="#fff" stroke-width="2.8"/></svg>
<svg style="left:1566px;top:543px" width="20" height="20" viewBox="0 0 20 20"><g stroke="#fff" stroke-width="1.2" fill="none">
 <path d="M1.3 6V1.3H6M13.5 1.3H18.3V6M18.3 13V18.3H13.5M6 18.3H1.3V13"/>
 <path d="M3.5 3.5L7.4 7.4M15.9 3.5L12.2 7.4M15.9 15.9L12.2 12.2M3.5 15.9L7.4 12.2" stroke-width="2"/>
 </g>
 <g fill="#fff"><path d="M2.8 2.8H7L2.8 7Z"/><path d="M16.6 2.8H12.4L16.6 7Z"/><path d="M16.6 16.6H12.4L16.6 12.4Z"/><path d="M2.8 16.6H7L2.8 12.4Z"/></g></svg>
<div class="a" style="left:728px;top:563px;width:869px;height:1px;background:#f4f4f4;"></div>
<div class="a" style="left:728px;top:564px;width:869px;height:266px;background:#262626;"></div>
<div class="t" style="left:731px;top:571px;font-size:14px;color:#f8f8f8;">属性</div>
<div class="t" style="left:1161px;top:571px;font-size:14px;color:#f8f8f8;">值</div>
<div class="a" style="left:728px;top:591px;width:429px;height:29px;background:#4a4a4a;border:1px solid #6a6a6a;border-left:0"></div>
<div class="a" style="left:1158px;top:591px;width:429px;height:29px;background:#4a4a4a;border:1px solid #6a6a6a"></div>
<div class="a" style="left:728px;top:621px;width:429px;height:29px;background:#4a4a4a;border:1px solid #6a6a6a;border-left:0"></div>
<div class="a" style="left:1158px;top:621px;width:429px;height:29px;background:#4a4a4a;border:1px solid #6a6a6a"></div>
<div class="a" style="left:728px;top:651px;width:429px;height:29px;background:#4a4a4a;border:1px solid #6a6a6a;border-left:0"></div>
<div class="a" style="left:1158px;top:651px;width:429px;height:29px;background:#4a4a4a;border:1px solid #6a6a6a"></div>
<div class="a" style="left:728px;top:681px;width:429px;height:29px;background:#4a4a4a;border:1px solid #6a6a6a;border-left:0"></div>
<div class="a" style="left:1158px;top:681px;width:429px;height:29px;background:#4a4a4a;border:1px solid #6a6a6a"></div>
<div class="a" style="left:728px;top:711px;width:429px;height:29px;background:#4a4a4a;border:1px solid #6a6a6a;border-left:0"></div>
<div class="a" style="left:1158px;top:711px;width:429px;height:29px;background:#4a4a4a;border:1px solid #6a6a6a"></div>
<div class="a" style="left:728px;top:741px;width:429px;height:29px;background:#4a4a4a;border:1px solid #6a6a6a;border-left:0"></div>
<div class="a" style="left:1158px;top:741px;width:429px;height:29px;background:#4a4a4a;border:1px solid #6a6a6a"></div>
<div class="a" style="left:728px;top:771px;width:429px;height:29px;background:#4a4a4a;border:1px solid #6a6a6a;border-left:0"></div>
<div class="a" style="left:1158px;top:771px;width:429px;height:29px;background:#4a4a4a;border:1px solid #6a6a6a"></div>
<div class="a" style="left:728px;top:801px;width:429px;height:29px;background:#4a4a4a;border:1px solid #6a6a6a;border-left:0"></div>
<div class="a" style="left:1158px;top:801px;width:429px;height:29px;background:#4a4a4a;border:1px solid #6a6a6a"></div>
<div class="t" style="left:733px;top:599px;font-size:14px;color:#f8f8f8;">状态</div>
<div class="t" style="left:733px;top:629px;font-size:14px;color:#f8f8f8;">时间</div>
<div class="t" style="left:1162px;top:599px;font-size:14px;color:#f8f8f8;">True</div>
<div class="t" style="left:1162px;top:629px;font-size:14px;color:#f8f8f8;">0.090</div>
<div class="a" style="left:1587px;top:564px;width:10px;height:266px;background:#3a3a3a;"></div>
<svg style="left:1587px;top:565px" width="10" height="7" viewBox="0 0 10 7"><path d="M1 6L5 1.5L9 6Z" fill="#9a9a9a"/></svg>
<div class="a" style="left:1587px;top:574px;width:10px;height:215px;background:#5aa3e6;"></div>
<div class="a" style="left:1587px;top:789px;width:10px;height:31px;background:#c8c8c8;"></div>
<svg style="left:1587px;top:822px" width="10" height="7" viewBox="0 0 10 7"><path d="M1 1L5 5.5L9 1Z" fill="#9a9a9a"/></svg>
<div class="a" style="left:0px;top:829px;width:1600px;height:31px;background:#2a2a2a;background:linear-gradient(#282828,#4b4b4b)"></div>
</body></html>
